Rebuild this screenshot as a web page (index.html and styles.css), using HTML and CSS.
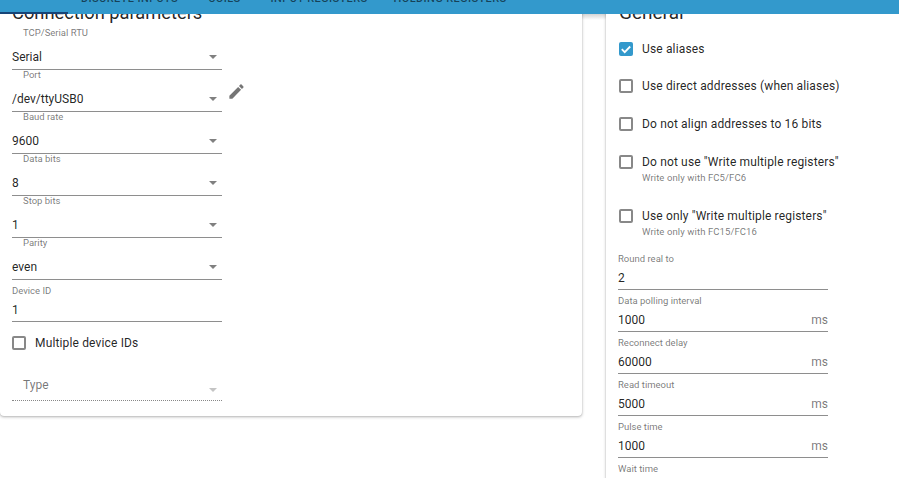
FILE: index.html
```html
<!DOCTYPE html>
<html lang="en">
<head>
<meta charset="utf-8">
<title>Modbus options</title>
<link rel="stylesheet" href="styles.css">
</head>
<body>
<header class="appbar">
  <nav class="tabs">
    <i class="indicator"></i>
    <span class="tab">Discrete inputs</span>
    <span class="tab">Coils</span>
    <span class="tab">Input registers</span>
    <span class="tab tab-last">Holding registers</span>
  </nav>
</header>
<main class="page">
  <section class="card card-left">
    <h2 class="title">Connection parameters</h2>
    <div class="field first"><label class="lbl ind">TCP/Serial RTU</label><div class="ctl"><span>Serial</span><i class="caret"></i></div></div>
    <div class="port-row">
      <div class="field"><label class="lbl ind">Port</label><div class="ctl"><span>/dev/ttyUSB0</span><i class="caret"></i></div></div>
      <svg class="edit" viewBox="0 0 24 24"><path d="M3 17.25V21h3.75L17.81 9.94l-3.75-3.75L3 17.25zM20.71 7.04c.39-.39.39-1.02 0-1.41l-2.34-2.34c-.39-.39-1.02-.39-1.41 0l-1.83 1.83 3.75 3.75 1.83-1.83z"/></svg>
    </div>
    <div class="field"><label class="lbl ind">Baud rate</label><div class="ctl"><span>9600</span><i class="caret"></i></div></div>
    <div class="field"><label class="lbl ind">Data bits</label><div class="ctl"><span>8</span><i class="caret"></i></div></div>
    <div class="field"><label class="lbl ind">Stop bits</label><div class="ctl"><span>1</span><i class="caret"></i></div></div>
    <div class="field"><label class="lbl ind">Parity</label><div class="ctl"><span>even</span><i class="caret"></i></div></div>
    <div class="field num"><label class="lbl">Device ID</label><div class="ctl"><span>1</span></div></div>
    <div class="check device-check"><i class="box"></i><span class="check-text">Multiple device IDs</span></div>
    <div class="ctl type-select"><span>Type</span><i class="caret"></i></div>
  </section>
  <section class="card card-right">
    <h2 class="title title-right">General</h2>
    <div class="options">
      <div class="check opt"><i class="box box-on"><svg viewBox="0 0 14 14"><path d="M2.8 7.2l2.9 2.9L11.2 4.5" fill="none" stroke="#fff" stroke-width="1.8"/></svg></i><span class="check-text">Use aliases</span></div>
      <div class="check opt"><i class="box"></i><span class="check-text">Use direct addresses (when aliases)</span></div>
      <div class="check opt"><i class="box"></i><span class="check-text">Do not align addresses to 16 bits</span></div>
      <div class="check opt hint"><i class="box"></i><div><span class="check-text">Do not use "Write multiple registers"</span><small>Write only with FC5/FC6</small></div></div>
      <div class="check opt hint"><i class="box"></i><div><span class="check-text">Use only "Write multiple registers"</span><small>Write only with FC15/FC16</small></div></div>
    </div>
    <div class="numbers">
      <div class="field num"><label class="lbl">Round real to</label><div class="ctl"><span>2</span></div></div>
      <div class="field num"><label class="lbl">Data polling interval</label><div class="ctl"><span>1000</span><em>ms</em></div></div>
      <div class="field num"><label class="lbl">Reconnect delay</label><div class="ctl"><span>60000</span><em>ms</em></div></div>
      <div class="field num"><label class="lbl">Read timeout</label><div class="ctl"><span>5000</span><em>ms</em></div></div>
      <div class="field num"><label class="lbl">Pulse time</label><div class="ctl"><span>1000</span><em>ms</em></div></div>
      <div class="field num"><label class="lbl">Wait time</label></div>
    </div>
  </section>
</main>
</body>
</html>
```
FILE: styles.css
```css
* { box-sizing: border-box; }
html, body { margin: 0; height: 100%; }
body {
  overflow: hidden;
  background: #fff;
  color: rgba(0, 0, 0, .87);
  font-family: Roboto, sans-serif;
  font-size: 12px;
}
.appbar {
  position: absolute;
  top: 0; left: 0; right: 0;
  z-index: 2;
  height: 14px;
  overflow: hidden;
  background: #39c;
}
.tabs { display: flex; margin-top: -8px; padding-left: 81px; gap: 30px; }
.tab {
  font-size: 11px;
  font-weight: 500;
  line-height: 14px;
  letter-spacing: .38px;
  text-transform: uppercase;
  color: rgba(0, 0, 0, .58);
}
.tab-last { margin-left: -4px; }
.indicator {
  position: absolute;
  left: 0; top: 12px;
  width: 68px; height: 2px;
  background: #164477;
}
.page { display: flex; align-items: flex-start; gap: 24px; height: 478px; overflow: hidden; position: relative; }
.page::before {
  content: "";
  position: absolute;
  left: 0; right: 0; top: 14px;
  height: 6px;
  background: linear-gradient(#d4d4d4, #fff);
}
.card {
  position: relative;
  flex: none;
  background: #fff;
  border-radius: 0 0 4px 4px;
  box-shadow: 0 1px 3px rgba(0,0,0,.3), 0 0 1px rgba(0,0,0,.2);
}
.card-left { width: 582px; height: 416px; padding: 1px 12px 0; }
.card-right { width: 320px; height: 500px; padding: 1px 12px 0 13px; }
.title { margin: 0; font-size: 18.3px; font-weight: 400; line-height: 24px; }
.title-right { font-size: 19px; }
.field { width: 210px; height: 42px; display: flex; flex-direction: column; }
.first { margin-top: 3px; }
.lbl { display: block; flex: none; height: 12px; margin-top: -1px; line-height: 12px; font-size: 9.5px; color: rgba(0, 0, 0, .54); }
.ind { padding-left: 11px; }
.ctl {
  position: relative;
  display: flex;
  flex: none;
  justify-content: space-between;
  align-items: center;
  height: 31px;
  padding-top: 5px;
  border-bottom: 1px solid #8e8e8e;
  font-size: 12px;
}
.ctl em { font-style: normal; color: rgba(0, 0, 0, .54); }
.caret {
  position: absolute;
  right: 5px; top: 16px;
  border: 4px solid transparent;
  border-top-color: #808080;
  border-bottom: 0;
}
.port-row { display: flex; align-items: center; }
.edit { width: 19px; height: 19px; margin: 1px 0 0 5px; fill: #757575; }
.check { display: flex; align-items: center; gap: 9px; }
.box {
  flex: none;
  width: 14px; height: 14px;
  border: 2px solid #888;
  border-radius: 2px;
}
.box-on { border: 0; background: #39c; display: block; }
.box-on svg { display: block; }
.check-text { display: block; letter-spacing: .15px; line-height: 14px; color: rgba(0,0,0,.87); }
.device-check { margin-top: 14px; }
.type-select {
  width: 210px;
  margin-top: 20px;
  padding: 0 11px 1px;
  border-bottom: 1px dotted #888;
  color: rgba(0,0,0,.54);
}
.type-select .caret { top: 18px; border-top-color: #c4c4c4; }
.options { padding-top: 5px; }
.opt { height: 37.5px; }
.hint { align-items: flex-start; height: 54px; padding-top: 12px; }
.hint small { display: block; margin-top: 3px; font-size: 9.5px; letter-spacing: .1px; color: rgba(0, 0, 0, .54); }
.num .lbl { margin-top: 5px; }
.num .ctl { height: 25px; padding-top: 2px; }
.numbers { margin: -3px 0 0 -1px; }
```
